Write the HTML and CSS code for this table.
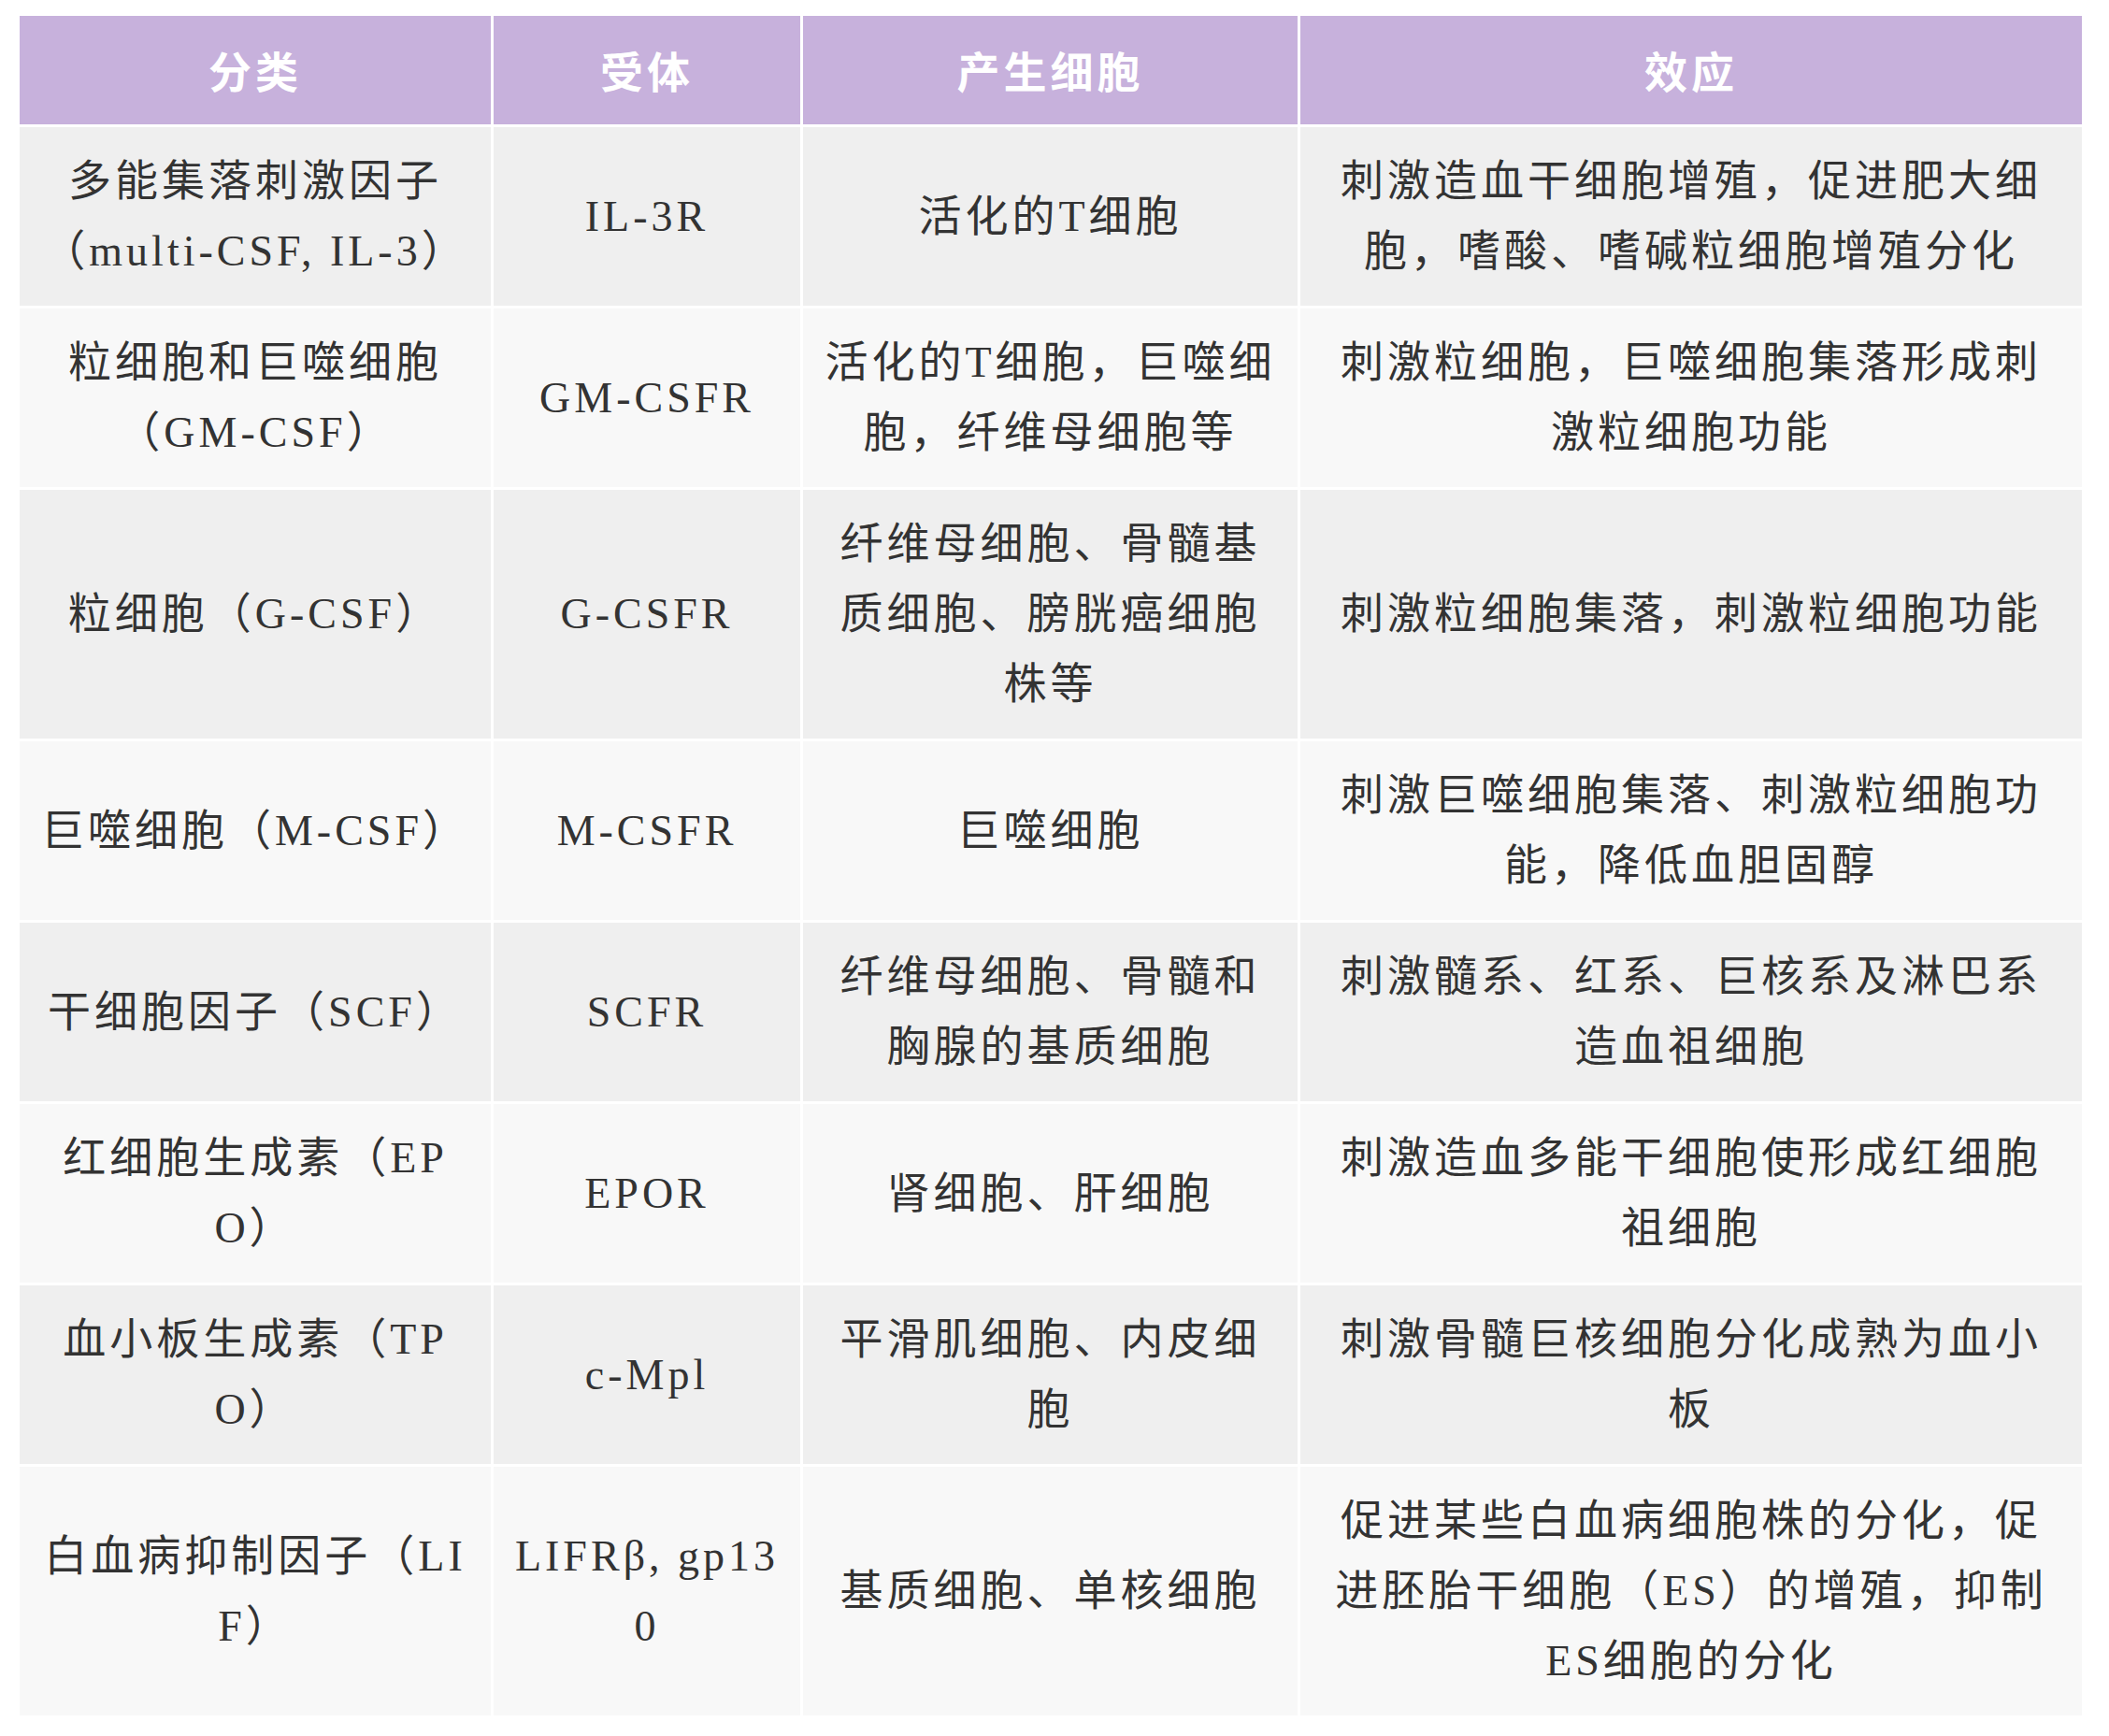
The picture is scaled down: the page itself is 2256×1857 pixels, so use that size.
FILE: index.html
```html
<!DOCTYPE html>
<html lang="zh-CN">
<head>
<meta charset="utf-8">
<title>集落刺激因子</title>
<link rel="stylesheet" href="styles.css">
</head>
<body>
<table class="csf-table">
  <colgroup>
    <col class="c1"><col class="c2"><col class="c3"><col class="c4">
  </colgroup>
  <thead>
    <tr><th>分类</th><th>受体</th><th>产生细胞</th><th>效应</th></tr>
  </thead>
  <tbody>
    <tr class="dark"><td>多能集落刺激因子（multi-CSF, IL-3）</td><td>IL-3R</td><td>活化的T细胞</td><td>刺激造血干细胞增殖，促进肥大细胞，嗜酸、嗜碱粒细胞增殖分化</td></tr>
    <tr class="light"><td>粒细胞和巨噬细胞（GM-CSF）</td><td>GM-CSFR</td><td>活化的T细胞，巨噬细胞，纤维母细胞等</td><td>刺激粒细胞，巨噬细胞集落形成刺激粒细胞功能</td></tr>
    <tr class="dark"><td>粒细胞（G-CSF）</td><td>G-CSFR</td><td>纤维母细胞、骨髓基质细胞、膀胱癌细胞株等</td><td>刺激粒细胞集落，刺激粒细胞功能</td></tr>
    <tr class="light"><td>巨噬细胞（M-CSF）</td><td>M-CSFR</td><td>巨噬细胞</td><td>刺激巨噬细胞集落、刺激粒细胞功能，降低血胆固醇</td></tr>
    <tr class="dark"><td>干细胞因子（SCF）</td><td>SCFR</td><td>纤维母细胞、骨髓和胸腺的基质细胞</td><td>刺激髓系、红系、巨核系及淋巴系造血祖细胞</td></tr>
    <tr class="light"><td>红细胞生成素（EPO）</td><td>EPOR</td><td>肾细胞、肝细胞</td><td>刺激造血多能干细胞使形成红细胞祖细胞</td></tr>
    <tr class="dark"><td>血小板生成素（TPO）</td><td>c-Mpl</td><td>平滑肌细胞、内皮细胞</td><td>刺激骨髓巨核细胞分化成熟为血小板</td></tr>
    <tr class="light"><td>白血病抑制因子（LIF）</td><td>LIFRβ, gp130</td><td>基质细胞、单核细胞</td><td>促进某些白血病细胞株的分化，促进胚胎干细胞（ES）的增殖，抑制ES细胞的分化</td></tr>
  </tbody>
</table>
</body>
</html>
```

FILE: styles.css
```css
html, body {
  margin: 0;
  padding: 0;
  background: #ffffff;
}

.csf-table {
  margin: 14px 0 0 18px;
  width: 2212px;
  table-layout: fixed;
  border-collapse: separate;
  border-spacing: 3px;
  font-family: "Liberation Serif", "Noto Sans CJK SC", serif;
  font-size: 46px;
  letter-spacing: 4px;
  line-height: 75px;
  color: #333333;
}

.c1 { width: 504px; }
.c2 { width: 328px; }
.c3 { width: 529px; }
.c4 { width: 836px; }

.csf-table th {
  background: #c7b1dc;
  color: #ffffff;
  font-family: "Noto Sans CJK SC", sans-serif;
  font-weight: 700;
  text-align: center;
  vertical-align: middle;
  padding: 20px 0 21px;
}

.csf-table td {
  text-align: center;
  vertical-align: middle;
  padding: 20px 20px 21px;
  word-break: break-all;
}

.csf-table td:nth-child(1) { padding-left: 22px; padding-right: 22px; }
.csf-table td:nth-child(2) { padding-left: 14px; padding-right: 14px; }
.csf-table td:nth-child(3) { padding-left: 20px; padding-right: 20px; }
.csf-table td:nth-child(4) { padding-left: 30px; padding-right: 30px; }

.dark td { background: #efefef; }
.light td { background: #f8f8f8; }
```
